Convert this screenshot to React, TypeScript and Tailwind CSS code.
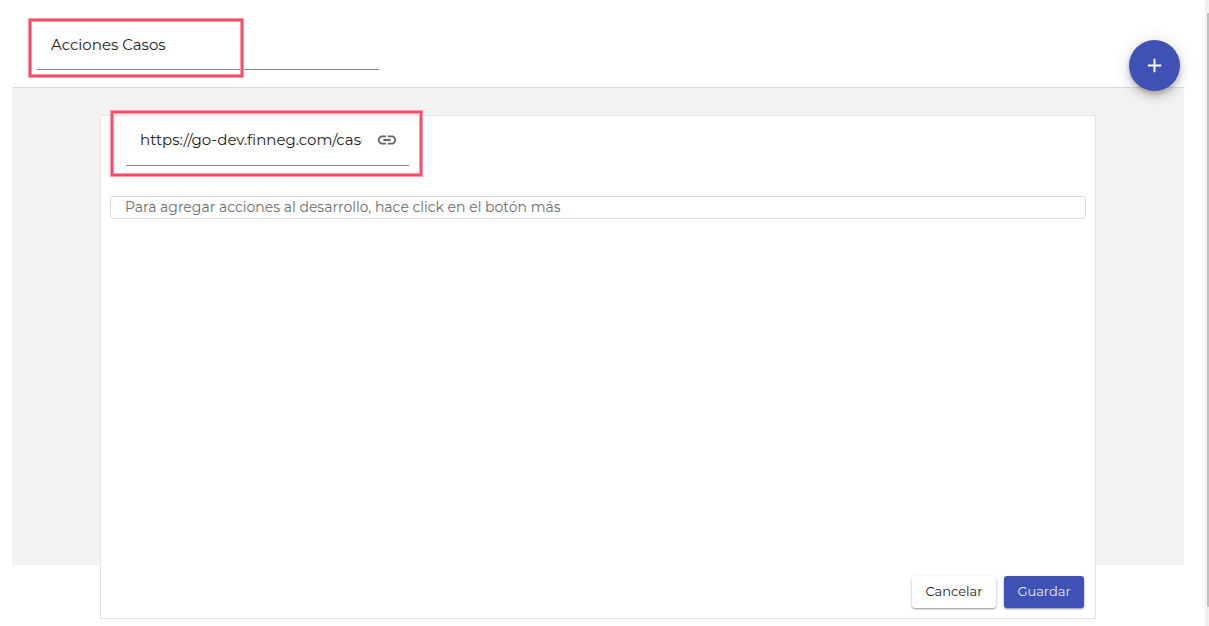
import React, { useState } from 'react';

interface HighlightProps {
  className: string;
}

// Red frame that calls attention to a field
const Highlight: React.FC<HighlightProps> = ({ className }) => (
  <div
    aria-hidden="true"
    className={`pointer-events-none absolute border-2 border-[#ff4865] shadow-[0_0_0_1px_#ff9aab,inset_0_0_0_1px_#ff9aab] ${className}`}
  />
);

const LinkIcon: React.FC = () => (
  <svg viewBox="0 0 24 24" className="size-[22px] fill-[#666666]" aria-hidden="true">
    <path d="M3.9 12c0-1.71 1.39-3.1 3.1-3.1h4V7H7c-2.76 0-5 2.24-5 5s2.24 5 5 5h4v-1.9H7c-1.71 0-3.1-1.39-3.1-3.1zM8 13h8v-2H8v2zm9-6h-4v1.9h4c1.71 0 3.1 1.39 3.1 3.1s-1.39 3.1-3.1 3.1h-4V17h4c2.76 0 5-2.24 5-5s-2.24-5-5-5z" />
  </svg>
);

const PlusIcon: React.FC = () => (
  <svg viewBox="0 0 24 24" className="size-[23px] fill-white" aria-hidden="true">
    <path d="M19 13h-6v6h-2v-6H5v-2h6V5h2v6h6v2z" />
  </svg>
);

const App: React.FC = () => {
  const [name, setName] = useState('Acciones Casos');
  const [url, setUrl] = useState('https://go-dev.finneg.com/casos');

  return (
    <div className="flex min-h-screen bg-white font-[Montserrat,Inter,sans-serif] text-[#212121]">
      <main className="ml-3 mr-[21px] min-w-0 flex-1">
        {/* Header */}
        <header className="relative border-b border-[#dcdcdc] pt-5 pr-20 pb-[17px] pl-[25px]">
          <div className="relative w-full max-w-[342px]">
            <input
              type="text"
              aria-label="Nombre"
              value={name}
              onChange={e => setName(e.target.value)}
              className="block h-[50px] w-full border-b border-[#8c8c8c] bg-transparent px-[14px] pb-px text-[15px] leading-6 outline-none"
            />
            <Highlight className="-top-px -left-2 h-[58px] w-[214px]" />
          </div>
          <button
            type="button"
            aria-label="Agregar acción"
            className="absolute top-10 right-1 flex size-[51px] items-center justify-center rounded-full bg-[#3f51b5] shadow-[0_3px_5px_-1px_rgba(0,0,0,0.2),0_6px_10px_0_rgba(0,0,0,0.14),0_1px_18px_0_rgba(0,0,0,0.12)]"
          >
            <PlusIcon />
          </button>
        </header>

        {/* Card hangs below the grey area */}
        <section className="flex bg-[#f3f2f1] px-[88px] pt-[27px]">
          <div className="-mb-[54px] flex min-h-[calc(100vh-122px)] min-w-0 flex-1 flex-col border border-[#e5e5e5] bg-white">
            <div className="relative ml-[25px] flex h-[50px] w-[283px] items-center border-b border-[#8c8c8c] pr-[11px] pb-px pl-[14px]">
              <input
                type="text"
                aria-label="URL"
                value={url}
                onChange={e => setUrl(e.target.value)}
                className="mr-[14px] min-w-0 flex-1 bg-transparent text-[15px] leading-6 outline-none"
              />
              <button type="button" aria-label="Abrir enlace">
                <LinkIcon />
              </button>
              <Highlight className="-top-[5px] -left-[15px] h-[65px] w-[311px]" />
            </div>

            <p className="mx-[9px] mt-[30px] rounded-[3px] border border-[#dcdcdc] px-[14px] pb-px text-sm leading-5 text-[#6c6c6c]">
              Para agregar acciones al desarrollo, hace click en el botón más
            </p>

            <div className="mt-auto flex justify-end gap-2 pr-[11px] pb-[10px] text-[13px]">
              <button
                type="button"
                className="h-8 w-[84px] rounded-[3px] bg-white shadow-[0_1px_3px_rgba(0,0,0,0.25),0_1px_1px_rgba(0,0,0,0.2)]"
              >
                Cancelar
              </button>
              <button
                type="button"
                className="h-8 w-20 rounded-[3px] bg-[#3f51b5] text-[#e8eaf6] shadow-[0_1px_3px_rgba(0,0,0,0.25),0_1px_1px_rgba(0,0,0,0.2)]"
              >
                Guardar
              </button>
            </div>
          </div>
        </section>
      </main>

      {/* Scroll track */}
      <div aria-hidden="true" className="flex w-1 bg-[#f1f1f1] pt-[13px] pb-[19px] pl-[2px]">
        <div className="flex-1 bg-[#c1c1c1]" />
      </div>
    </div>
  );
};

export default App;
